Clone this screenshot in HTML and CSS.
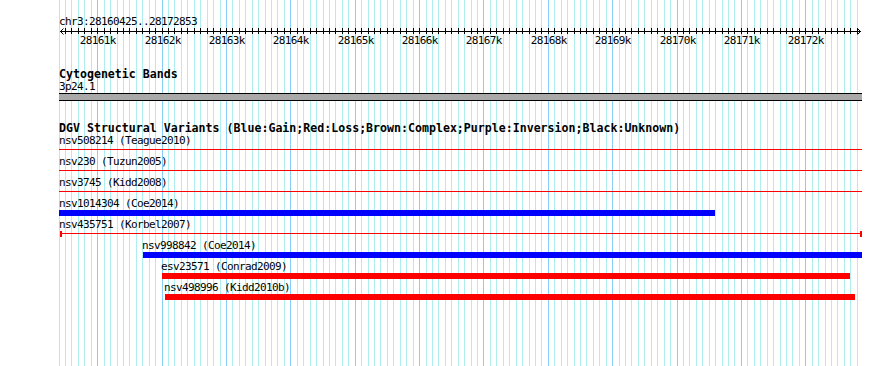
FILE: index.html
```html
<!DOCTYPE html>
<html lang="en">
<head>
    <meta charset="UTF-8">
    <title>chr3:28160425..28172853</title>
    <link rel="stylesheet" href="styles.css">
</head>
<body>
    <div class="browser">
        <svg class="grid" id="grid" width="890" height="366"></svg>

        <div class="track ruler">
            <div class="ruler-label">chr3:28160425..28172853</div>
            <svg class="ruler-axis" id="axis" width="890" height="19"></svg>
        </div>

        <div class="track cytoband">
            <div class="track-title">Cytogenetic Bands</div>
            <div class="band-label">3p24.1</div>
            <div class="band"></div>
        </div>

        <div class="track dgv">
            <div class="track-title">DGV Structural Variants (Blue:Gain;Red:Loss;Brown:Complex;Purple:Inversion;Black:Unknown)</div>

            <div class="feature">
                <div class="feature-label" style="margin-left: 59px">nsv508214 (Teague2010)</div>
                <div class="glyph line loss" style="margin-left: 59px; width: 803px"></div>
            </div>
            <div class="feature">
                <div class="feature-label" style="margin-left: 59px">nsv230 (Tuzun2005)</div>
                <div class="glyph line loss" style="margin-left: 59px; width: 803px"></div>
            </div>
            <div class="feature">
                <div class="feature-label" style="margin-left: 59px">nsv3745 (Kidd2008)</div>
                <div class="glyph line loss" style="margin-left: 59px; width: 803px"></div>
            </div>
            <div class="feature">
                <div class="feature-label" style="margin-left: 59px">nsv1014304 (Coe2014)</div>
                <div class="glyph bar gain" style="margin-left: 59px; width: 656px"></div>
            </div>
            <div class="feature">
                <div class="feature-label" style="margin-left: 59px">nsv435751 (Korbel2007)</div>
                <div class="glyph line capped loss" style="margin-left: 60px; width: 802px"></div>
            </div>
            <div class="feature">
                <div class="feature-label" style="margin-left: 142px">nsv998842 (Coe2014)</div>
                <div class="glyph bar gain" style="margin-left: 143px; width: 719px"></div>
            </div>
            <div class="feature">
                <div class="feature-label" style="margin-left: 161px">esv23571 (Conrad2009)</div>
                <div class="glyph bar loss" style="margin-left: 162px; width: 688px"></div>
            </div>
            <div class="feature">
                <div class="feature-label" style="margin-left: 164px">nsv498996 (Kidd2010b)</div>
                <div class="glyph bar loss" style="margin-left: 165px; width: 690px"></div>
            </div>
        </div>
    </div>

    <script>
        const SVG_NS = 'http://www.w3.org/2000/svg';
        const gridStart = 28160400; // pierwsza linia siatki (co 100 bp)
        const pxPerBp = 0.06437;
        const left = 59, right = 862;

        function toPx(bp) {
            return Math.floor(left + 0.1 + (bp - gridStart) * pxPerBp);
        }

        function add(parent, tag, attrs, text) {
            const el = document.createElementNS(SVG_NS, tag);
            for (const key in attrs) el.setAttribute(key, attrs[key]);
            if (text) el.textContent = text;
            parent.appendChild(el);
            return el;
        }

        function drawGrid() {
            const grid = document.getElementById('grid');
            const axis = document.getElementById('axis');

            for (let bp = gridStart; ; bp += 100) {
                const x = toPx(bp);
                if (x >= right) break;
                const major = bp % 1000 === 0;
                add(grid, 'line', {
                    x1: x + 0.5, y1: 0, x2: x + 0.5, y2: 366,
                    class: major ? 'grid-major' : 'grid-minor'
                });
                if (x > left + 3) {
                    add(axis, 'line', { x1: x + 0.5, y1: 0, x2: x + 0.5, y2: 6, class: 'tick' });
                }
                if (major) {
                    add(axis, 'text', { x: x + 0.8, y: 16, class: 'tick-label' }, (bp / 1000) + 'k');
                }
            }

            // oś z grotami na obu końcach
            add(axis, 'line', { x1: 60, y1: 3.5, x2: 861, y2: 3.5, class: 'tick' });
            add(axis, 'path', { d: 'M63.5 0.5 L60.5 3.5 L63.5 6.5', class: 'arrow' });
            add(axis, 'path', { d: 'M857.5 0.5 L860.5 3.5 L857.5 6.5', class: 'arrow' });
        }

        drawGrid();
    </script>
</body>
</html>
```

FILE: styles.css
```css
html, body {
    margin: 0;
    padding: 0;
    background: #ffffff;
    overflow: hidden;
}
.browser {
    position: relative;
    width: 890px;
    height: 366px;
    font-family: "DejaVu Sans Mono", "Liberation Mono", monospace;
    font-size: 11px;
    letter-spacing: -0.62px; /* 6px na znak jak w czcionce GD */
    color: #000000;
}
.grid {
    position: absolute;
    top: 0;
    left: 0;
    shape-rendering: crispEdges;
}
.grid-minor {
    stroke: #afeeee;
    stroke-width: 1;
}
.grid-major {
    stroke: #87cefa;
    stroke-width: 1;
}
.track {
    position: relative; /* nad siatką */
    z-index: 1;
}
.ruler {
    padding-top: 15px;
}
.ruler-label {
    padding-left: 59px;
    line-height: 13px;
    height: 13px;
    white-space: nowrap;
}
.ruler-axis {
    display: block;
    overflow: visible;
}
.tick {
    stroke: #000000;
    stroke-width: 1;
    shape-rendering: crispEdges;
}
.arrow {
    stroke: #000000;
    stroke-width: 1;
    fill: none;
}
.tick-label {
    font-family: "DejaVu Sans Mono", "Liberation Mono", monospace;
    font-size: 11px;
    letter-spacing: -0.62px;
    text-anchor: middle;
    fill: #000000;
}
.track-title {
    padding-left: 59px;
    font-size: 11.6px;
    letter-spacing: 0;
    font-weight: bold;
    line-height: 12px;
    height: 12px;
    white-space: nowrap;
}
.cytoband {
    margin-top: 21px;
}
.band-label {
    padding-left: 59px;
    line-height: 13px;
    height: 13px;
}
.band {
    margin-left: 59px;
    width: 803px;
    height: 8px;
    box-sizing: border-box;
    border-top: 1px solid #000000;
    border-bottom: 1px solid #000000;
    background-color: #a9a9a9;
}
.dgv {
    margin-top: 21px;
}
.feature {
    height: 21px;
}
.feature-label {
    line-height: 13px;
    height: 13px;
    white-space: nowrap;
}
.glyph {
    height: 6px;
    box-sizing: border-box;
}
.bar.gain {
    background-color: #0000ff;
}
.bar.loss {
    background-color: #ff0000;
}
.line.loss {
    background: linear-gradient(#ff0000, #ff0000) 0 2px / 100% 1px no-repeat;
}
.line.capped {
    border-left: 2px solid #ff0000;
    border-right: 2px solid #ff0000;
}
```
